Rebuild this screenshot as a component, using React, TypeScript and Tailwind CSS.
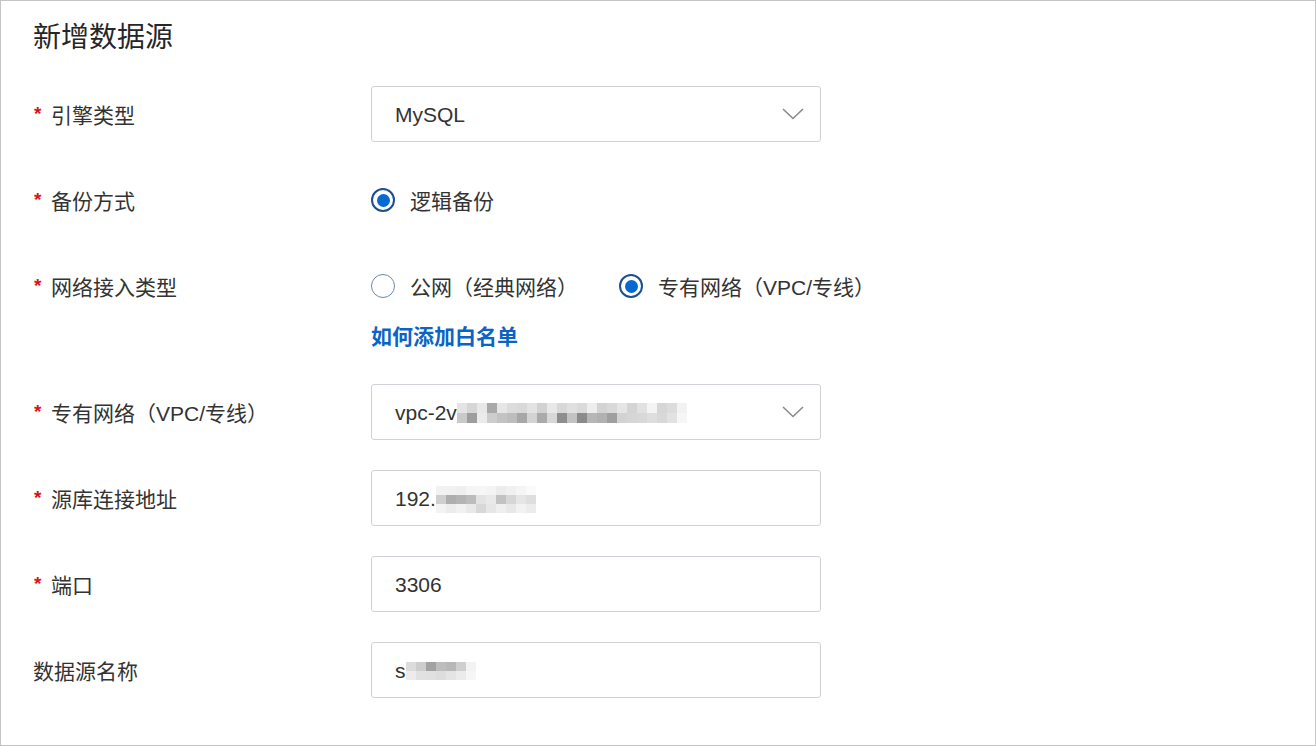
import React from 'react';

const font = { fontFamily: `'Liberation Sans', 'Noto Sans CJK SC', sans-serif` };

// blurred (mosaic) parts of the values
const vpcShades = [
  ['bg-[#e4e4e4]', 'bg-[#d6d6d6]', 'bg-[#e8e8e8]', 'bg-[#a9a9a9]', 'bg-[#e6e6e6]', 'bg-[#dcdcdc]', 'bg-[#d9d9d9]', 'bg-[#e3e3e3]', 'bg-[#d2d2d2]', 'bg-[#e8e8e8]', 'bg-[#d8d8d8]', 'bg-[#e0e0e0]', 'bg-[#dadada]', 'bg-[#ededed]', 'bg-[#d3d3d3]', 'bg-[#d9d9d9]', 'bg-[#e5e5e5]', 'bg-[#d4d4d4]', 'bg-[#e1e1e1]', 'bg-[#f4f4f4]', 'bg-[#d6d6d6]', 'bg-[#dcdcdc]', 'bg-[#f2f2f2]'],
  ['bg-[#c9c9c9]', 'bg-[#9d9d9d]', 'bg-[#ebebeb]', 'bg-[#cdcdcd]', 'bg-[#c3c3c3]', 'bg-[#bdbdbd]', 'bg-[#a7a7a7]', 'bg-[#d3d3d3]', 'bg-[#aaaaaa]', 'bg-[#d7d7d7]', 'bg-[#8e8e8e]', 'bg-[#c2c2c2]', 'bg-[#8b8b8b]', 'bg-[#b6b6b6]', 'bg-[#b1b1b1]', 'bg-[#9f9f9f]', 'bg-[#d3d3d3]', 'bg-[#d6d6d6]', 'bg-[#d8d8d8]', 'bg-[#dedede]', 'bg-[#d8d8d8]', 'bg-[#e2e2e2]', 'bg-[#f6f6f6]'],
];
const ipShades = [
  ['bg-[#f2f2f2]', 'bg-[#f1f1f1]', 'bg-[#efefef]', 'bg-[#f5f5f5]', 'bg-[#f6f6f6]', 'bg-[#f4f4f4]', 'bg-[#ececec]', 'bg-[#f0f0f0]', 'bg-[#f5f5f5]', 'bg-[#fafafa]'],
  ['bg-[#cfcfcf]', 'bg-[#aeaeae]', 'bg-[#b4b4b4]', 'bg-[#bcbcbc]', 'bg-[#e3e3e3]', 'bg-[#e9e9e9]', 'bg-[#c2c2c2]', 'bg-[#d6d6d6]', 'bg-[#e5e5e5]', 'bg-[#dedede]'],
  ['bg-[#f3f3f3]', 'bg-[#ececec]', 'bg-[#f1f1f1]', 'bg-[#e9e9e9]', 'bg-[#d8d8d8]', 'bg-[#e6e6e6]', 'bg-[#efefef]', 'bg-[#e8e8e8]', 'bg-[#f2f2f2]', 'bg-[#ececec]'],
];
const nameShades = [
  ['bg-[#dcdcdc]', 'bg-[#cdcdcd]', 'bg-[#a2a2a2]', 'bg-[#bdbdbd]', 'bg-[#b8b8b8]', 'bg-[#cfcfcf]', 'bg-[#f3f3f3]'],
  ['bg-[#ececec]', 'bg-[#e1e1e1]', 'bg-[#e0e0e0]', 'bg-[#dddddd]', 'bg-[#e4e4e4]', 'bg-[#ebebeb]', 'bg-[#f6f6f6]'],
];

const Mosaic: React.FC<{ rows: string[][]; cell: string }> = ({ rows, cell }) => (
  <div className="flex flex-col">
    {rows.map((row, i) => (
      <div key={i} className="flex">
        {row.map((c, j) => (
          <div key={j} className={`${cell} ${c}`} />
        ))}
      </div>
    ))}
  </div>
);

const Label: React.FC<{ text: string; required?: boolean }> = ({ text, required = true }) => (
  <div className="w-[338px] shrink-0 flex items-center text-[21px] text-[#333] pt-[3px]">
    {required && (
      <span className="text-[#d9141b] text-[19px] font-bold w-[18px] pl-[1px] leading-none -mt-[4px]">*</span>
    )}
    <span>{text}</span>
  </div>
);

const Chevron = () => (
  <svg width="22" height="12" viewBox="0 0 22 12" fill="none">
    <path d="M1 1l10 9.5L21 1" stroke="#8a8a8a" strokeWidth="1.6" />
  </svg>
);

const Box: React.FC<{ children: React.ReactNode; select?: boolean }> = ({ children, select }) => (
  <div className="w-[450px] h-[56px] border border-[#cfd3d8] rounded-[3px] flex items-center pl-[23px] pr-[16px] text-[21px] text-[#333] bg-white">
    <div className="flex-1 flex items-center pt-[2px]">{children}</div>
    {select && <Chevron />}
  </div>
);

const Radio: React.FC<{ label: string; checked?: boolean }> = ({ label, checked }) => (
  <div className="flex items-center">
    {checked ? (
      <span className="w-[24px] h-[24px] rounded-full border-2 border-[#1d4f8f] flex items-center justify-center">
        <span className="w-[13px] h-[13px] rounded-full bg-[#0868d2]" />
      </span>
    ) : (
      <span className="w-[24px] h-[24px] rounded-full border-[1.5px] border-[#6b87a8]" />
    )}
    <span className="ml-[15px] text-[21px] text-[#333] pt-[3px]">{label}</span>
  </div>
);

export default function App() {
  return (
    <div className="w-[1316px] h-[746px] bg-white border border-[#c4c4c4] overflow-hidden" style={font}>
      <div className="pl-[32px] pt-[20px]">
        <h1 className="text-[28px] leading-[34px] text-[#262626]">新增数据源</h1>
        <div className="mt-[31px] flex flex-col gap-[30px]">
          <div className="flex items-center h-[56px]">
            <Label text="引擎类型" />
            <Box select>MySQL</Box>
          </div>
          <div className="flex items-center h-[56px]">
            <Label text="备份方式" />
            <Radio label="逻辑备份" checked />
          </div>
          <div className="flex h-[96px]">
            <div className="h-[56px] flex items-center">
              <Label text="网络接入类型" />
            </div>
            <div className="flex flex-col">
              <div className="h-[56px] flex items-center gap-[41px]">
                <Radio label="公网（经典网络）" />
                <Radio label="专有网络（VPC/专线）" checked />
              </div>
              <a href="#" className="mt-[9px] text-[21px] leading-[28px] font-bold text-[#0a64c6]">如何添加白名单</a>
            </div>
          </div>
          <div className="flex items-center h-[56px]">
            <Label text="专有网络（VPC/专线）" />
            <Box select>
              <span>vpc-2v</span>
              <Mosaic rows={vpcShades} cell="w-[10px] h-[10px]" />
            </Box>
          </div>
          <div className="flex items-center h-[56px]">
            <Label text="源库连接地址" />
            <Box>
              <span>192.</span>
              <Mosaic rows={ipShades} cell="w-[10px] h-[9px]" />
            </Box>
          </div>
          <div className="flex items-center h-[56px]">
            <Label text="端口" />
            <Box>3306</Box>
          </div>
          <div className="flex items-center h-[56px]">
            <Label text="数据源名称" required={false} />
            <Box>
              <span>s</span>
              <Mosaic rows={nameShades} cell="w-[10px] h-[9px]" />
            </Box>
          </div>
        </div>
      </div>
    </div>
  );
}
